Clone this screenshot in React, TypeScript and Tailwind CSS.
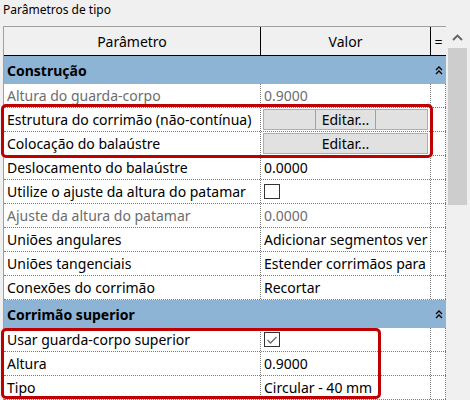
import React from 'react';

type Row =
  | { kind: 'group'; label: string }
  | {
      kind: 'row';
      label: string;
      value?: string;
      disabled?: boolean;
      button?: 'split' | 'plain';
      check?: boolean;
    };

const rows: Row[] = [
  { kind: 'group', label: 'Construção' },
  { kind: 'row', label: 'Altura do guarda-corpo', value: '0.9000', disabled: true },
  { kind: 'row', label: 'Estrutura do corrimão (não-contínua)', button: 'split' },
  { kind: 'row', label: 'Colocação do balaústre', button: 'plain' },
  { kind: 'row', label: 'Deslocamento do balaústre', value: '0.0000' },
  { kind: 'row', label: 'Utilize o ajuste da altura do patamar', check: false },
  { kind: 'row', label: 'Ajuste da altura do patamar', value: '0.0000', disabled: true },
  { kind: 'row', label: 'Uniões angulares', value: 'Adicionar segmentos ver' },
  { kind: 'row', label: 'Uniões tangenciais', value: 'Estender corrimãos para' },
  { kind: 'row', label: 'Conexões do corrimão', value: 'Recortar' },
  { kind: 'group', label: 'Corrimão superior' },
  { kind: 'row', label: 'Usar guarda-corpo superior', check: true },
  { kind: 'row', label: 'Altura', value: '0.9000' },
  { kind: 'row', label: 'Tipo', value: 'Circular - 40 mm' },
];

function DoubleChevron() {
  return (
    <svg width="8" height="9" viewBox="0 0 8 9" className="block">
      <path d="M1 4 L4 1 L7 4" fill="none" stroke="#000" strokeWidth="1.3" />
      <path d="M1 8 L4 5 L7 8" fill="none" stroke="#000" strokeWidth="1.3" />
    </svg>
  );
}

function Checkbox({ checked }: { checked: boolean }) {
  return (
    <div className="w-[16px] h-[15px] border border-[#333333] bg-white flex items-center justify-center">
      {checked && (
        <svg width="12" height="10" viewBox="0 0 12 10">
          <path d="M1.5 5 L4.5 8 L10.5 2" fill="none" stroke="#6b6b6b" strokeWidth="1.4" />
        </svg>
      )}
    </div>
  );
}

function EditButton({ split }: { split: boolean }) {
  return (
    <div className="mx-[1px] h-[21px] w-full bg-[#e1e1e1] border border-[#adadad] flex items-center justify-center text-black">
      <span
        className={
          split
            ? 'px-[6px] h-full flex items-center border-x border-[#a0a0a0]'
            : 'px-[6px] h-full flex items-center'
        }
      >
        Editar...
      </span>
    </div>
  );
}

export default function App() {
  return (
    <div className="relative w-[470px] h-[400px] overflow-hidden bg-[#f0f0f0] font-['Noto_Sans',sans-serif] text-black">
      <div className="h-[26px] pl-[3px] pt-[1px] text-[12px] leading-[18px]">Parâmetros de tipo</div>

      <div className="flex">
        {/* table */}
        <div className="ml-[3px] w-[443px] border-l border-t border-[#a0a0a0] text-[14px]">
          {/* header */}
          <div className="flex h-[29px] border-b border-black bg-[#f0f0f0]">
            <div className="w-[257px] border-r border-black flex items-center justify-center">Parâmetro</div>
            <div className="w-[170px] border-r border-black flex items-center justify-center">Valor</div>
            <div className="w-[15px] flex items-center justify-center">=</div>
          </div>

          {rows.map((r, i) =>
            r.kind === 'group' ? (
              <div key={i} className="flex h-[28px] items-center bg-[#8db3d5] w-[442px]">
                <div className="flex-1 pl-[3px] font-bold">{r.label}</div>
                <div className="w-[15px] flex justify-center">
                  <DoubleChevron />
                </div>
              </div>
            ) : (
              <div
                key={i}
                className="flex h-[24px] bg-white border-b border-dotted border-[#7a7a7a] w-[442px]"
              >
                <div
                  className={
                    r.disabled
                      ? 'w-[257px] border-r border-dotted border-[#7a7a7a] pl-[3px] flex items-center whitespace-nowrap overflow-hidden text-[#6d6d6d]'
                      : 'w-[257px] border-r border-dotted border-[#7a7a7a] pl-[3px] flex items-center whitespace-nowrap overflow-hidden'
                  }
                >
                  {r.label}
                </div>
                <div
                  className={
                    r.disabled
                      ? 'w-[170px] border-r border-dotted border-[#7a7a7a] pl-[3px] flex items-center whitespace-nowrap overflow-hidden text-[#6d6d6d]'
                      : 'w-[170px] border-r border-dotted border-[#7a7a7a] pl-[3px] flex items-center whitespace-nowrap overflow-hidden'
                  }
                >
                  {r.button ? (
                    <div className="-ml-[2px] w-full pr-[1px]">
                      <EditButton split={r.button === 'split'} />
                    </div>
                  ) : r.check !== undefined ? (
                    <Checkbox checked={r.check} />
                  ) : (
                    r.value
                  )}
                </div>
                <div className="w-[15px] border-r border-dotted border-[#7a7a7a]" />
              </div>
            )
          )}
        </div>

        {/* scrollbar */}
        <div className="w-[24px] pl-[2px] pt-[1px]">
          <div className="h-[21px] w-[19px] flex items-center justify-center">
            <svg width="11" height="7" viewBox="0 0 11 7">
              <path d="M1 6 L5.5 1.5 L10 6" fill="none" stroke="#606060" strokeWidth="1.8" />
            </svg>
          </div>
          <div className="h-[157px] w-[19px] bg-[#cdcdcd]" />
        </div>
      </div>

      {/* highlight boxes */}
      <div className="absolute left-[1px] top-[104px] w-[432px] h-[54px] border-[3px] border-[#c00000] rounded-[5px]" />
      <div className="absolute left-[1px] top-[328px] w-[380px] h-[71px] border-[3px] border-[#c00000] rounded-[5px]" />
    </div>
  );
}
